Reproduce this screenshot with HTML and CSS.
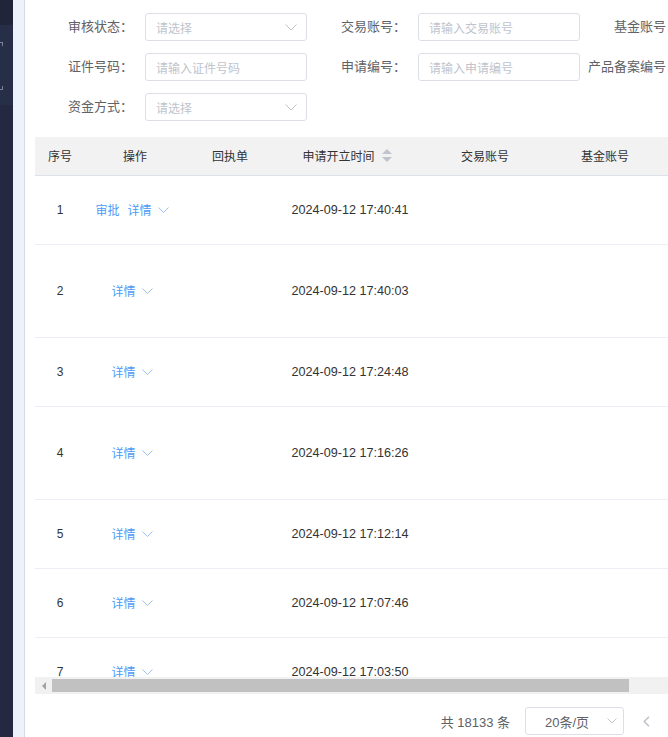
FILE: index.html
```html
<!DOCTYPE html>
<html lang="zh-CN">
<head>
<meta charset="utf-8">
<title>申请列表</title>
<link rel="stylesheet" href="styles.css">
</head>
<body>
<div class="sidebar">
  <div class="sb-top"></div>
  <div class="sb-group">
    <span class="sb-arrow sb-arrow-1"></span>
    <span class="sb-arrow sb-arrow-2"></span>
  </div>
  <div class="sb-rest"></div>
</div>
<div class="gutter"></div>
<main class="main">
  <form class="filters">
    <div class="frow">
      <div class="fitem">
        <label class="flabel">审核状态：</label>
        <div class="finput select"><span class="ph">请选择</span>
          <svg class="chev" width="12" height="7" viewBox="0 0 12 7"><path d="M0.5 0.5 L6 6 L11.5 0.5" fill="none" stroke="#c0c4cc" stroke-width="1"/></svg>
        </div>
      </div>
      <div class="fitem">
        <label class="flabel">交易账号：</label>
        <div class="finput"><span class="ph">请输入交易账号</span></div>
      </div>
      <div class="fitem">
        <label class="flabel">基金账号：</label>
        <div class="finput"><span class="ph">请输入基金账号</span></div>
      </div>
    </div>
    <div class="frow">
      <div class="fitem">
        <label class="flabel">证件号码：</label>
        <div class="finput"><span class="ph">请输入证件号码</span></div>
      </div>
      <div class="fitem">
        <label class="flabel">申请编号：</label>
        <div class="finput"><span class="ph">请输入申请编号</span></div>
      </div>
      <div class="fitem">
        <label class="flabel">产品备案编号：</label>
        <div class="finput"><span class="ph">请输入产品备案编号</span></div>
      </div>
    </div>
    <div class="frow">
      <div class="fitem">
        <label class="flabel">资金方式：</label>
        <div class="finput select"><span class="ph">请选择</span>
          <svg class="chev" width="12" height="7" viewBox="0 0 12 7"><path d="M0.5 0.5 L6 6 L11.5 0.5" fill="none" stroke="#c0c4cc" stroke-width="1"/></svg>
        </div>
      </div>
    </div>
  </form>

  <div class="table-view">
    <table class="grid">
      <colgroup>
        <col class="c-idx"><col class="c-op"><col class="c-rcpt"><col class="c-time"><col class="c-acc"><col class="c-fund"><col class="c-more">
      </colgroup>
      <thead>
        <tr>
          <th>序号</th>
          <th>操作</th>
          <th>回执单</th>
          <th><span class="sortable">申请开立时间<span class="sort"><i class="up"></i><i class="down"></i></span></span></th>
          <th>交易账号</th>
          <th>基金账号</th>
          <th>证件类型</th>
        </tr>
      </thead>
      <tbody>
        <tr class="r-short">
          <td>1</td>
          <td><span class="ops ops-two"><a class="lnk">审批</a><a class="lnk">详情</a><svg class="dd" width="11" height="6" viewBox="0 0 11 6"><path d="M0.5 0.5 L5.5 5.5 L10.5 0.5" fill="none" stroke="#9dbff5" stroke-width="1"/></svg></span></td>
          <td></td>
          <td class="time">2024-09-12 17:40:41</td>
          <td></td><td></td><td></td>
        </tr>
        <tr class="r-tall">
          <td>2</td>
          <td><span class="ops"><a class="lnk">详情</a><svg class="dd" width="11" height="6" viewBox="0 0 11 6"><path d="M0.5 0.5 L5.5 5.5 L10.5 0.5" fill="none" stroke="#9dbff5" stroke-width="1"/></svg></span></td>
          <td></td>
          <td class="time">2024-09-12 17:40:03</td>
          <td></td><td></td><td></td>
        </tr>
        <tr class="r-short">
          <td>3</td>
          <td><span class="ops"><a class="lnk">详情</a><svg class="dd" width="11" height="6" viewBox="0 0 11 6"><path d="M0.5 0.5 L5.5 5.5 L10.5 0.5" fill="none" stroke="#9dbff5" stroke-width="1"/></svg></span></td>
          <td></td>
          <td class="time">2024-09-12 17:24:48</td>
          <td></td><td></td><td></td>
        </tr>
        <tr class="r-tall">
          <td>4</td>
          <td><span class="ops"><a class="lnk">详情</a><svg class="dd" width="11" height="6" viewBox="0 0 11 6"><path d="M0.5 0.5 L5.5 5.5 L10.5 0.5" fill="none" stroke="#9dbff5" stroke-width="1"/></svg></span></td>
          <td></td>
          <td class="time">2024-09-12 17:16:26</td>
          <td></td><td></td><td></td>
        </tr>
        <tr class="r-short">
          <td>5</td>
          <td><span class="ops"><a class="lnk">详情</a><svg class="dd" width="11" height="6" viewBox="0 0 11 6"><path d="M0.5 0.5 L5.5 5.5 L10.5 0.5" fill="none" stroke="#9dbff5" stroke-width="1"/></svg></span></td>
          <td></td>
          <td class="time">2024-09-12 17:12:14</td>
          <td></td><td></td><td></td>
        </tr>
        <tr class="r-short">
          <td>6</td>
          <td><span class="ops"><a class="lnk">详情</a><svg class="dd" width="11" height="6" viewBox="0 0 11 6"><path d="M0.5 0.5 L5.5 5.5 L10.5 0.5" fill="none" stroke="#9dbff5" stroke-width="1"/></svg></span></td>
          <td></td>
          <td class="time">2024-09-12 17:07:46</td>
          <td></td><td></td><td></td>
        </tr>
        <tr class="r-short">
          <td>7</td>
          <td><span class="ops"><a class="lnk">详情</a><svg class="dd" width="11" height="6" viewBox="0 0 11 6"><path d="M0.5 0.5 L5.5 5.5 L10.5 0.5" fill="none" stroke="#9dbff5" stroke-width="1"/></svg></span></td>
          <td></td>
          <td class="time">2024-09-12 17:03:50</td>
          <td></td><td></td><td></td>
        </tr>
      </tbody>
    </table>
  </div>

  <div class="hscroll">
    <span class="hs-btn"><i class="hs-left"></i></span>
    <span class="hs-thumb"></span>
  </div>

  <div class="pager">
    <span class="total">共 18133 条</span>
    <div class="psize">20条/页
      <svg class="pchev" width="10" height="6" viewBox="0 0 10 6"><path d="M0.5 0.5 L5 5 L9.5 0.5" fill="none" stroke="#c0c4cc" stroke-width="1"/></svg>
    </div>
    <span class="prev"><svg width="7" height="11" viewBox="0 0 7 11"><path d="M6 0.8 L1.3 5.5 L6 10.2" fill="none" stroke="#c0c4cc" stroke-width="1.6"/></svg></span>
  </div>
</main>
</body>
</html>
```

FILE: styles.css
```css
* { box-sizing: border-box; }

html, body {
  margin: 0;
  padding: 0;
}

body {
  width: 668px;
  height: 737px;
  overflow: hidden;
  display: flex;
  background: #ffffff;
  font-family: "Liberation Sans", "Noto Sans CJK SC", sans-serif;
  color: #333333;
}

/* sidebar */
.sidebar {
  flex: 0 0 13px;
  display: flex;
  flex-direction: column;
  background: #222940;
}
.sb-top { height: 25px; background: #20263a; }
.sb-group {
  height: 80px;
  background: #272e47;
  display: flex;
  flex-direction: column;
  padding-top: 17px;
}
.sb-arrow {
  display: block;
  width: 4px;
  height: 4px;
  border-top: 1px solid #7d8398;
  border-right: 1px solid #7d8398;
  margin-left: -1px;
}
.sb-arrow-1 { transform: rotate(0deg); }
.sb-arrow-2 { margin-top: 40px; transform: rotate(90deg); }
.sb-rest { flex: 1; background: #222940; }

.gutter {
  flex: 0 0 12px;
  background: #eef3fb;
  border-right: 1px solid #d6dbe6;
}

/* main */
.main {
  flex: 0 0 643px;
  width: 643px;
  padding-left: 10px;
  overflow: hidden;
  display: flex;
  flex-direction: column;
}

/* filters */
.filters {
  padding-top: 13px;
  display: flex;
  flex-direction: column;
  gap: 12px;
}
.frow {
  display: flex;
  gap: 1px;
  white-space: nowrap;
}
.fitem {
  flex: 0 0 272px;
  display: flex;
  align-items: center;
  height: 28px;
}
.flabel {
  flex: 0 0 98px;
  text-align: right;
  margin-right: 12px;
  font-size: 13px;
  color: #606266;
  line-height: 28px;
}
.finput {
  flex: 0 0 162px;
  height: 28px;
  border: 1px solid #dcdfe6;
  border-radius: 3px;
  padding-left: 10px;
  padding-right: 9px;
  display: flex;
  align-items: center;
  justify-content: space-between;
  background: #fff;
}
.ph {
  font-size: 12px;
  color: #c0c4cc;
}
.chev { display: block; }

/* table */
.table-view {
  margin-top: 16px;
  height: 540px;
  overflow: hidden;
}
.grid {
  border-collapse: collapse;
  table-layout: fixed;
  width: 750px;
  font-size: 12px;
}
.c-idx { width: 50px; }
.c-op { width: 100px; }
.c-rcpt { width: 90px; }
.c-time { width: 150px; }
.c-acc { width: 120px; }
.c-fund { width: 120px; }
.c-more { width: 120px; }

.grid th {
  height: 38px;
  background: #f2f2f2;
  border-bottom: 1px solid #dde1ea;
  font-weight: normal;
  color: #333333;
  text-align: center;
  padding: 0;
  white-space: nowrap;
}
.grid td {
  border-bottom: 1px solid #ebeef5;
  text-align: center;
  padding: 0;
  color: #333333;
  white-space: nowrap;
}
.r-short td { height: 69px; }
.r-tall td { height: 93px; }

.time {
  font-size: 12.6px;
}

.sortable {
  display: inline-flex;
  align-items: center;
  padding-right: 6px;
}
.sort {
  display: inline-flex;
  flex-direction: column;
  gap: 3px;
  margin-left: 7px;
}
.sort i {
  display: block;
  width: 0;
  height: 0;
  border-left: 5px solid transparent;
  border-right: 5px solid transparent;
}
.sort .up { border-bottom: 5px solid #c0c4cc; }
.sort .down { border-top: 5px solid #c0c4cc; }

.ops {
  display: inline-flex;
  align-items: center;
  padding-right: 6px;
}
.lnk {
  color: #4b9bf7;
  font-size: 12px;
}
.ops-two .lnk + .lnk { margin-left: 8px; }
.dd {
  display: block;
  margin-left: 6px;
  margin-top: 1px;
}

/* fake horizontal scrollbar */
.hscroll {
  height: 17px;
  background: #f1f1f1;
  display: flex;
  align-items: center;
  width: 700px;
}
.hs-btn {
  flex: 0 0 17px;
  height: 17px;
  display: flex;
  align-items: center;
  justify-content: center;
}
.hs-left {
  display: block;
  width: 0;
  height: 0;
  border-top: 4px solid transparent;
  border-bottom: 4px solid transparent;
  border-right: 4px solid #a3a3a3;
}
.hs-thumb {
  flex: 0 0 577px;
  height: 13px;
  background: #c1c1c1;
}

/* pager */
.pager {
  margin-top: 13px;
  display: flex;
  justify-content: flex-end;
  align-items: center;
  height: 28px;
}
.total {
  font-size: 13px;
  color: #606266;
  margin-right: 15px;
}
.psize {
  width: 99px;
  height: 28px;
  border: 1px solid #dcdfe6;
  border-radius: 3px;
  display: flex;
  align-items: center;
  justify-content: space-between;
  padding-left: 19px;
  padding-right: 6px;
  font-size: 13px;
  color: #606266;
}
.pchev { display: block; }
.prev {
  width: 44px;
  height: 28px;
  display: flex;
  align-items: center;
  justify-content: center;
}
.prev svg { display: block; }
```
